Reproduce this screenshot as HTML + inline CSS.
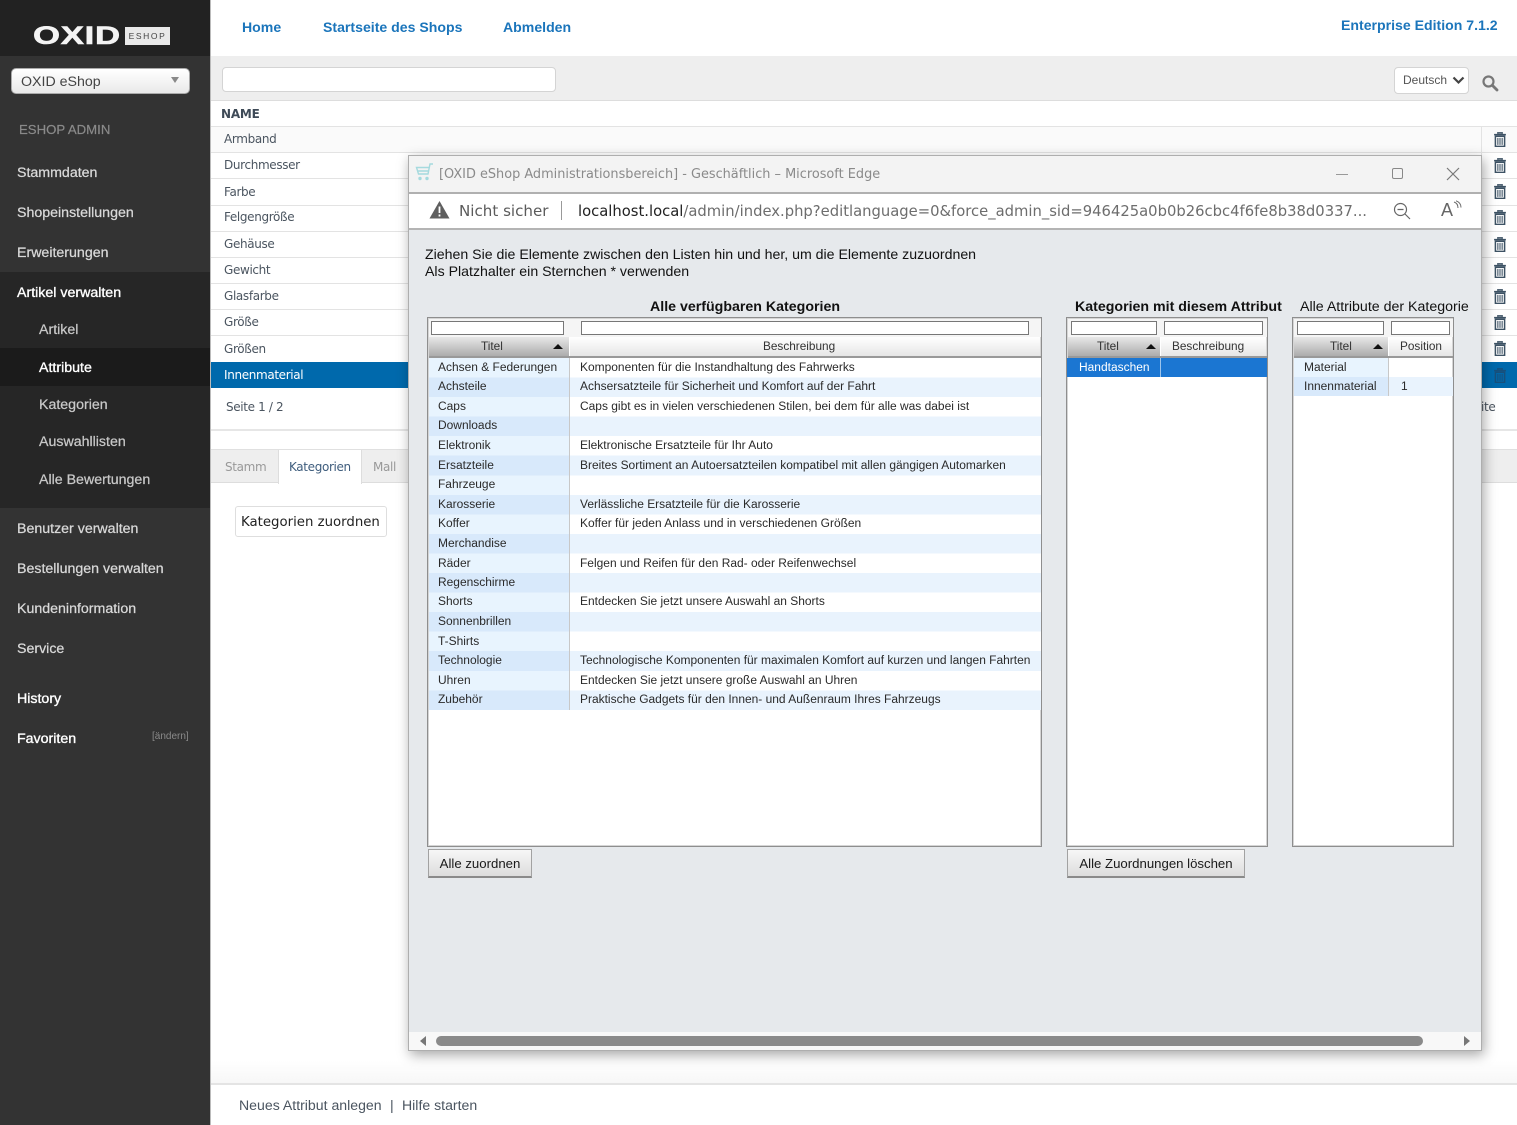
<!DOCTYPE html>
<html lang="de"><head><meta charset="utf-8"><title>OXID eShop Admin</title>
<style>
html,body{margin:0;padding:0;width:1517px;height:1125px;overflow:hidden;background:#fff;font-family:"Liberation Sans",sans-serif}
body{filter:blur(.3px)}
div,svg{position:absolute}
.t{white-space:nowrap;line-height:20px;height:20px}
.s{color:#d9d9d9;font-size:14.2px;left:17px;margin-top:1px;-webkit-text-stroke:.25px #d9d9d9}
.s2{color:#c8c8c8;font-size:14.2px;left:39px;margin-top:1px;-webkit-text-stroke:.25px #c8c8c8}
.w{color:#fff!important;-webkit-text-stroke:.35px #fff}
.l{color:#4b5560;font-family:"DejaVu Sans",sans-serif;font-size:12px;letter-spacing:-.35px;left:224px;margin-top:1px}
.ln{height:1px;left:211px;width:1306px;background:#e3e3e3}
.m{color:#2a2a2a;font-size:11.97px}
.h{color:#333;font-size:11.8px}
.b{color:#111;font-size:14.2px;font-weight:bold}
.f{background:#fff;border:1px solid #777;height:12px;box-sizing:content-box}
.tb{background:#fff;border:1px solid #8e8e8e;box-shadow:inset 0 0 0 1px #d5d5d5;box-sizing:border-box;top:317px;height:530px}
.g1{background:linear-gradient(#e8e8e8,#a9a9a9);top:337px;height:20px}
.g2{background:linear-gradient(#fff,#e4e4e4);top:337px;height:20px}
.tr{width:0;height:0;border-left:5px solid transparent;border-right:5px solid transparent;border-bottom:5px solid #111;top:344px}
.btn{top:849px;height:29px;box-sizing:border-box;background:linear-gradient(#f6f6f6,#dcdcdc);border:1px solid #a2a2a2;border-bottom:2px solid #8a8a8a;color:#1a1a1a;font-size:13.2px;line-height:26px;padding-top:1px;text-align:center}
.ic{left:1493px;width:14px;height:15px}
</style></head><body>

<!-- sidebar -->
<div style="left:0;top:0;width:210px;height:1125px;background:#333"></div>
<div style="left:0;top:0;width:210px;height:56px;background:#222"></div>
<div style="left:0;top:272px;width:210px;height:236px;background:#262626"></div>
<div style="left:0;top:348px;width:210px;height:38px;background:#1b1b1b"></div>
<div style="left:210px;top:0;width:1px;height:1125px;background:#bbb"></div>

<!-- logo -->
<div class="t" style="left:33px;top:23px;height:26px;line-height:26px;color:#f4f4f4;font-size:25px;font-weight:bold;letter-spacing:.5px;transform-origin:0 50%;transform:scaleX(1.39);-webkit-text-stroke:.6px #f4f4f4">OXID</div>
<div style="left:125px;top:27px;width:45px;height:18px;background:#e9e9e9"></div>
<div class="t" style="left:125px;top:26px;width:45px;text-align:center;color:#444;font-size:8.5px;letter-spacing:1.6px">ESHOP</div>

<!-- shop select -->
<div style="left:11px;top:68px;width:179px;height:26px;box-sizing:border-box;border:1px solid #aaa;border-radius:5px;background:linear-gradient(#fff,#e9e9e9)"></div>
<div class="t" style="left:21px;top:72px;color:#444;font-size:14.2px">OXID eShop</div>
<div style="left:171px;top:77px;width:0;height:0;border-left:4px solid transparent;border-right:4px solid transparent;border-top:6px solid #888"></div>

<div class="t" style="left:19px;top:120px;color:#8a8a8a;font-size:13.2px;-webkit-text-stroke:.2px #8a8a8a">ESHOP ADMIN</div>
<div class="t s" style="top:162px">Stammdaten</div>
<div class="t s" style="top:202px">Shopeinstellungen</div>
<div class="t s" style="top:242px">Erweiterungen</div>
<div class="t s w" style="top:282px">Artikel verwalten</div>
<div class="t s2" style="top:319px">Artikel</div>
<div class="t s2 w" style="top:357px">Attribute</div>
<div class="t s2" style="top:394px">Kategorien</div>
<div class="t s2" style="top:431px">Auswahllisten</div>
<div class="t s2" style="top:469px">Alle Bewertungen</div>
<div class="t s" style="top:518px">Benutzer verwalten</div>
<div class="t s" style="top:558px">Bestellungen verwalten</div>
<div class="t s" style="top:598px">Kundeninformation</div>
<div class="t s" style="top:638px">Service</div>
<div class="t s w" style="top:688px">History</div>
<div class="t s w" style="top:728px">Favoriten</div>
<div class="t" style="left:152px;top:727px;color:#8a8a8a;font-size:10px">[ändern]</div>

<!-- top nav -->
<div class="t" style="left:242px;top:17px;color:#1b75bb;font-size:14.1px;font-weight:bold">Home</div>
<div class="t" style="left:323px;top:17px;color:#1b75bb;font-size:14.1px;font-weight:bold">Startseite des Shops</div>
<div class="t" style="left:503px;top:17px;color:#1b75bb;font-size:14.1px;font-weight:bold">Abmelden</div>
<div class="t" style="left:1341px;top:15px;color:#1b75bb;font-size:14.1px;font-weight:bold">Enterprise Edition 7.1.2</div>

<!-- toolbar -->
<div style="left:211px;top:56px;width:1306px;height:44px;background:#eee;border-bottom:1px solid #ddd"></div>
<div style="left:222px;top:67px;width:334px;height:25px;box-sizing:border-box;background:#fff;border:1px solid #d4d4d4;border-radius:4px"></div>
<div style="left:1394px;top:67px;width:75px;height:27px;box-sizing:border-box;background:#fff;border:1px solid #d4d4d4;border-radius:4px"></div>
<div class="t" style="left:1403px;top:70px;color:#555;font-size:12px">Deutsch</div>
<svg style="left:1452px;top:76px" width="13" height="9" viewBox="0 0 13 9"><path d="M1.500 1.500 6.500 6.500 11.500 1.500" fill="none" stroke="#444" stroke-width="2.200"/></svg>
<svg style="left:1481px;top:74px" width="18" height="18" viewBox="0 0 18 18"><circle cx="7.500" cy="7.500" r="5" fill="none" stroke="#777" stroke-width="2.200"/><path d="M11.500 11.500 16 16" stroke="#777" stroke-width="2.800" stroke-linecap="round"/></svg>

<!-- list -->
<div class="t" style="left:221px;top:104px;color:#3e4a57;font-family:'DejaVu Sans',sans-serif;font-size:12px;letter-spacing:-.2px;font-weight:bold">NAME</div>
<div class="ln" style="top:126px"></div>
<div style="left:211px;top:127px;width:1306px;height:25px;background:#fafafa"></div>
<div class="ln" style="top:152px"></div>
<div class="ln" style="top:178px"></div>
<div class="ln" style="top:205px"></div>
<div class="ln" style="top:231px"></div>
<div class="ln" style="top:257px"></div>
<div class="ln" style="top:283px"></div>
<div class="ln" style="top:309px"></div>
<div class="ln" style="top:335px"></div>
<div style="left:1481px;top:127px;width:1px;height:235px;background:#e3e3e3"></div>
<div class="t l" style="top:128px">Armband</div>
<div class="t l" style="top:154px">Durchmesser</div>
<div class="t l" style="top:181px">Farbe</div>
<div class="t l" style="top:206px">Felgengröße</div>
<div class="t l" style="top:233px">Gehäuse</div>
<div class="t l" style="top:259px">Gewicht</div>
<div class="t l" style="top:285px">Glasfarbe</div>
<div class="t l" style="top:311px">Größe</div>
<div class="t l" style="top:338px">Größen</div>
<div style="left:211px;top:362px;width:1306px;height:26px;background:#0069ac"></div>
<div class="t l" style="top:364px;color:#fff">Innenmaterial</div>
<div class="t l" style="left:226px;top:396px">Seite 1 / 2</div>
<div class="t l" style="left:1481px;top:396px">ite</div>
<div style="left:211px;top:429px;width:1306px;height:2px;background:#e6e6e6"></div>

<!-- trash icons -->
<svg class="ic" style="top:132px" viewBox="0 0 12 14"><path d="M4 1.600V.8h4v.8M.5 2.500h11M1.700 4h8.600v9.400H1.700z" fill="none" stroke="#3d5264" stroke-width="1.400"/><path d="M4 5.500v6.500M6 5.500v6.500M8 5.500v6.500" stroke="#3d5264"/></svg>
<svg class="ic" style="top:158px" viewBox="0 0 12 14"><path d="M4 1.600V.8h4v.8M.5 2.500h11M1.700 4h8.600v9.400H1.700z" fill="none" stroke="#3d5264" stroke-width="1.400"/><path d="M4 5.500v6.500M6 5.500v6.500M8 5.500v6.500" stroke="#3d5264"/></svg>
<svg class="ic" style="top:184px" viewBox="0 0 12 14"><path d="M4 1.600V.8h4v.8M.5 2.500h11M1.700 4h8.600v9.400H1.700z" fill="none" stroke="#3d5264" stroke-width="1.400"/><path d="M4 5.500v6.500M6 5.500v6.500M8 5.500v6.500" stroke="#3d5264"/></svg>
<svg class="ic" style="top:210px" viewBox="0 0 12 14"><path d="M4 1.600V.8h4v.8M.5 2.500h11M1.700 4h8.600v9.400H1.700z" fill="none" stroke="#3d5264" stroke-width="1.400"/><path d="M4 5.500v6.500M6 5.500v6.500M8 5.500v6.500" stroke="#3d5264"/></svg>
<svg class="ic" style="top:237px" viewBox="0 0 12 14"><path d="M4 1.600V.8h4v.8M.5 2.500h11M1.700 4h8.600v9.400H1.700z" fill="none" stroke="#3d5264" stroke-width="1.400"/><path d="M4 5.500v6.500M6 5.500v6.500M8 5.500v6.500" stroke="#3d5264"/></svg>
<svg class="ic" style="top:263px" viewBox="0 0 12 14"><path d="M4 1.600V.8h4v.8M.5 2.500h11M1.700 4h8.600v9.400H1.700z" fill="none" stroke="#3d5264" stroke-width="1.400"/><path d="M4 5.500v6.500M6 5.500v6.500M8 5.500v6.500" stroke="#3d5264"/></svg>
<svg class="ic" style="top:289px" viewBox="0 0 12 14"><path d="M4 1.600V.8h4v.8M.5 2.500h11M1.700 4h8.600v9.400H1.700z" fill="none" stroke="#3d5264" stroke-width="1.400"/><path d="M4 5.500v6.500M6 5.500v6.500M8 5.500v6.500" stroke="#3d5264"/></svg>
<svg class="ic" style="top:315px" viewBox="0 0 12 14"><path d="M4 1.600V.8h4v.8M.5 2.500h11M1.700 4h8.600v9.400H1.700z" fill="none" stroke="#3d5264" stroke-width="1.400"/><path d="M4 5.500v6.500M6 5.500v6.500M8 5.500v6.500" stroke="#3d5264"/></svg>
<svg class="ic" style="top:341px" viewBox="0 0 12 14"><path d="M4 1.600V.8h4v.8M.5 2.500h11M1.700 4h8.600v9.400H1.700z" fill="none" stroke="#3d5264" stroke-width="1.400"/><path d="M4 5.500v6.500M6 5.500v6.500M8 5.500v6.500" stroke="#3d5264"/></svg>
<svg class="ic" style="top:368px" viewBox="0 0 12 14"><path d="M4 1.600V.8h4v.8M.5 2.500h11M1.700 4h8.600v9.400H1.700z" fill="none" stroke="#17507c" stroke-width="1.400"/><path d="M4 5.500v6.500M6 5.500v6.500M8 5.500v6.500" stroke="#17507c"/></svg>

<!-- tabs -->
<div style="left:211px;top:449px;width:1306px;height:34px;background:#eee;border-top:1px solid #e0e0e0;border-bottom:1px solid #ddd;box-sizing:border-box"></div>
<div style="left:278px;top:450px;width:84px;height:34px;background:#fff;border-left:1px solid #ddd;border-right:1px solid #ddd;box-sizing:border-box"></div>
<div class="t l" style="left:225px;top:456px;color:#999">Stamm</div>
<div class="t l" style="left:289px;top:456px;color:#3f5d7d">Kategorien</div>
<div class="t l" style="left:373px;top:456px;color:#999">Mall</div>
<div style="left:235px;top:506px;width:152px;height:31px;box-sizing:border-box;background:#fff;border:1px solid #dedede;border-radius:3px"></div>
<div class="t" style="left:241px;top:513px;color:#222;font-family:'DejaVu Sans',sans-serif;font-size:13.3px">Kategorien zuordnen</div>

<!-- footer -->
<div style="left:211px;top:1060px;width:1306px;height:23px;background:linear-gradient(#fff,#f7f7f7)"></div>
<div style="left:211px;top:1083px;width:1306px;height:2px;background:#e4e4e4"></div>
<div class="t" style="left:239px;top:1095px;color:#4b5560;font-size:14.1px">Neues Attribut anlegen</div>
<div class="t" style="left:390px;top:1095px;color:#4b5560;font-size:14.1px">|</div>
<div class="t" style="left:402px;top:1095px;color:#4b5560;font-size:14.1px">Hilfe starten</div>

<!-- popup -->
<div style="left:408px;top:155px;width:1074px;height:896px;background:#e6e9ec;box-sizing:border-box;border:1px solid #aeaeae;box-shadow:2px 4px 12px rgba(0,0,0,.35)"></div>
<div style="left:409px;top:156px;width:1072px;height:36px;background:#f3f3f3;border-bottom:2px solid #b0b0b0"></div>
<div style="left:409px;top:194px;width:1072px;height:34px;background:#fff;border-bottom:2px solid #b4b4b4"></div>
<svg style="left:414px;top:163px" width="20" height="19" viewBox="0 0 20 19"><path d="M19 1h-3l-2 10H4.500L2.500 4.500H15.500M3.500 8H15" fill="none" stroke="#a5dade" stroke-width="1.400"/><circle cx="6" cy="15.500" r="1.700" fill="#a5dade"/><circle cx="13" cy="15.500" r="1.700" fill="#a5dade"/></svg>
<div class="t" style="left:439px;top:165px;color:#8a8a8a;font-family:'DejaVu Sans',sans-serif;font-size:12.88px">[OXID eShop Administrationsbereich] - Geschäftlich – Microsoft Edge</div>
<div style="left:1336px;top:174px;width:12px;height:1px;background:#999"></div>
<div style="left:1392px;top:168px;width:11px;height:11px;box-sizing:border-box;border:1px solid #888;border-radius:2px"></div>
<svg style="left:1446px;top:167px" width="14" height="14" viewBox="0 0 14 14"><path d="M1 1 13 13M13 1 1 13" stroke="#777" stroke-width="1.200"/></svg>
<svg style="left:429px;top:200px" width="21" height="19" viewBox="0 0 21 19"><path d="M10.500 1 20.500 18.500H.5z" fill="#5f5f5f"/><path d="M10.500 6.500v6.500M10.500 14.500v2" stroke="#fff" stroke-width="1.800"/></svg>
<div class="t" style="left:459px;top:201px;color:#5b5b5b;font-family:'DejaVu Sans',sans-serif;font-size:15.1px">Nicht sicher</div>
<div style="left:561px;top:201px;width:1px;height:19px;background:#999"></div>
<div class="t" style="left:578px;top:202px;font-family:'DejaVu Sans',sans-serif;font-size:14.77px;color:#6d6d6d;width:795px;overflow:hidden"><span style="color:#222">localhost.local</span>/admin/index.php?editlanguage=0&amp;force_admin_sid=946425a0b0b26cbc4f6fe8b38d0337...</div>
<svg style="left:1393px;top:202px" width="18" height="18" viewBox="0 0 18 18"><circle cx="7.500" cy="7.500" r="6" fill="none" stroke="#666" stroke-width="1.200"/><path d="M4.500 7.500h6M12 12 17 17" stroke="#666" stroke-width="1.200"/></svg>
<div class="t" style="left:1441px;top:200px;color:#666;font-size:18px">A</div>
<svg style="left:1452px;top:200px" width="10" height="12" viewBox="0 0 10 12"><path d="M2 2C5 3 6 5 6 8M4 .8C7.500 2 9 4.500 9 7.500" fill="none" stroke="#666"/></svg>

<div class="t" style="left:425px;top:244px;color:#111;font-size:14.15px">Ziehen Sie die Elemente zwischen den Listen hin und her, um die Elemente zuzuordnen</div>
<div class="t" style="left:425px;top:261px;color:#111;font-size:14.15px">Als Platzhalter ein Sternchen * verwenden</div>

<div class="t b" style="left:650px;top:297px">Alle verfügbaren Kategorien</div>
<div class="t b" style="left:1075px;top:297px">Kategorien mit diesem Attribut</div>
<div class="t" style="left:1300px;top:297px;color:#111;font-size:14.2px">Alle Attribute der Kategorie</div>

<!-- table 1 -->
<div class="tb" style="left:427px;width:615px"></div>
<div style="left:429px;top:319px;width:612px;height:18px;background:#f5f5f5"></div>
<div class="f" style="left:431px;top:321px;width:131px"></div>
<div class="f" style="left:581px;top:321px;width:446px"></div>
<div class="g1" style="left:429px;width:140px"></div>
<div class="g2" style="left:570px;width:470px"></div>
<div style="left:429px;top:356px;width:612px;height:2px;background:#999"></div>
<div class="t h" style="left:481px;top:336px">Titel</div>
<div class="t h" style="left:763px;top:336px">Beschreibung</div>
<div class="tr" style="left:553px"></div>
<div style="left:429px;top:358px;width:612px;height:352px;background:repeating-linear-gradient(#fff 0,#fff 19.55px,#e9f3fd 19.55px,#e9f3fd 39.1px)"></div>
<div style="left:429px;top:358px;width:140px;height:352px;background:repeating-linear-gradient(#e8f4fe 0,#e8f4fe 19.55px,#d8e9fb 19.55px,#d8e9fb 39.1px)"></div>
<div style="left:569px;top:358px;width:1px;height:352px;background:#c8c8c8"></div>

<div class="t m" style="left:438px;top:357px">Achsen &amp; Federungen</div><div class="t m" style="left:580px;top:357px">Komponenten für die Instandhaltung des Fahrwerks</div>
<div class="t m" style="left:438px;top:376px">Achsteile</div><div class="t m" style="left:580px;top:376px">Achsersatzteile für Sicherheit und Komfort auf der Fahrt</div>
<div class="t m" style="left:438px;top:396px">Caps</div><div class="t m" style="left:580px;top:396px">Caps gibt es in vielen verschiedenen Stilen, bei dem für alle was dabei ist</div>
<div class="t m" style="left:438px;top:415px">Downloads</div>
<div class="t m" style="left:438px;top:435px">Elektronik</div><div class="t m" style="left:580px;top:435px">Elektronische Ersatzteile für Ihr Auto</div>
<div class="t m" style="left:438px;top:455px">Ersatzteile</div><div class="t m" style="left:580px;top:455px">Breites Sortiment an Autoersatzteilen kompatibel mit allen gängigen Automarken</div>
<div class="t m" style="left:438px;top:474px">Fahrzeuge</div>
<div class="t m" style="left:438px;top:494px">Karosserie</div><div class="t m" style="left:580px;top:494px">Verlässliche Ersatzteile für die Karosserie</div>
<div class="t m" style="left:438px;top:513px">Koffer</div><div class="t m" style="left:580px;top:513px">Koffer für jeden Anlass und in verschiedenen Größen</div>
<div class="t m" style="left:438px;top:533px">Merchandise</div>
<div class="t m" style="left:438px;top:553px">Räder</div><div class="t m" style="left:580px;top:553px">Felgen und Reifen für den Rad- oder Reifenwechsel</div>
<div class="t m" style="left:438px;top:572px">Regenschirme</div>
<div class="t m" style="left:438px;top:591px">Shorts</div><div class="t m" style="left:580px;top:591px">Entdecken Sie jetzt unsere Auswahl an Shorts</div>
<div class="t m" style="left:438px;top:611px">Sonnenbrillen</div>
<div class="t m" style="left:438px;top:631px">T-Shirts</div>
<div class="t m" style="left:438px;top:650px">Technologie</div><div class="t m" style="left:580px;top:650px">Technologische Komponenten für maximalen Komfort auf kurzen und langen Fahrten</div>
<div class="t m" style="left:438px;top:670px">Uhren</div><div class="t m" style="left:580px;top:670px">Entdecken Sie jetzt unsere große Auswahl an Uhren</div>
<div class="t m" style="left:438px;top:689px">Zubehör</div><div class="t m" style="left:580px;top:689px">Praktische Gadgets für den Innen- und Außenraum Ihres Fahrzeugs</div>

<!-- table 2 -->
<div class="tb" style="left:1066px;width:202px"></div>
<div style="left:1068px;top:319px;width:199px;height:18px;background:#f5f5f5"></div>
<div class="f" style="left:1071px;top:321px;width:84px"></div>
<div class="f" style="left:1164px;top:321px;width:97px"></div>
<div class="g1" style="left:1068px;width:92px"></div>
<div class="g2" style="left:1161px;width:105px"></div>
<div style="left:1068px;top:356px;width:199px;height:2px;background:#999"></div>
<div class="t h" style="left:1097px;top:336px">Titel</div>
<div class="t h" style="left:1172px;top:336px">Beschreibung</div>
<div class="tr" style="left:1146px"></div>
<div style="left:1067px;top:358px;width:200px;height:19px;background:#1b76d2"></div>
<div style="left:1160px;top:358px;width:1px;height:19px;background:#9cc4ec"></div>
<div class="t m" style="left:1079px;top:357px;color:#fff">Handtaschen</div>

<!-- table 3 -->
<div class="tb" style="left:1292px;width:162px"></div>
<div style="left:1294px;top:319px;width:159px;height:18px;background:#f5f5f5"></div>
<div class="f" style="left:1297px;top:321px;width:85px"></div>
<div class="f" style="left:1391px;top:321px;width:57px"></div>
<div class="g1" style="left:1294px;width:94px"></div>
<div class="g2" style="left:1389px;width:63px"></div>
<div style="left:1294px;top:356px;width:159px;height:2px;background:#999"></div>
<div class="t h" style="left:1330px;top:336px">Titel</div>
<div class="t h" style="left:1400px;top:336px">Position</div>
<div class="tr" style="left:1373px"></div>
<div style="left:1294px;top:358px;width:94px;height:19px;background:#e8f4fe"></div>
<div style="left:1294px;top:377px;width:94px;height:19px;background:#d8e9fb"></div>
<div style="left:1389px;top:377px;width:64px;height:19px;background:#e9f3fd"></div>
<div style="left:1388px;top:358px;width:1px;height:38px;background:#c8c8c8"></div>
<div class="t m" style="left:1304px;top:357px">Material</div>
<div class="t m" style="left:1304px;top:376px">Innenmaterial</div>
<div class="t m" style="left:1401px;top:376px">1</div>

<div class="btn" style="left:428px;width:104px">Alle zuordnen</div>
<div class="btn" style="left:1067px;width:178px">Alle Zuordnungen löschen</div>

<!-- scrollbar -->
<div style="left:409px;top:1032px;width:1072px;height:18px;background:#f8f8f8"></div>
<div style="left:436px;top:1036px;width:987px;height:10px;background:#8a8a8a;border-radius:5px"></div>
<div style="left:420px;top:1036px;width:0;height:0;border-top:5px solid transparent;border-bottom:5px solid transparent;border-right:6px solid #777"></div>
<div style="left:1464px;top:1036px;width:0;height:0;border-top:5px solid transparent;border-bottom:5px solid transparent;border-left:6px solid #777"></div>
</body></html>
